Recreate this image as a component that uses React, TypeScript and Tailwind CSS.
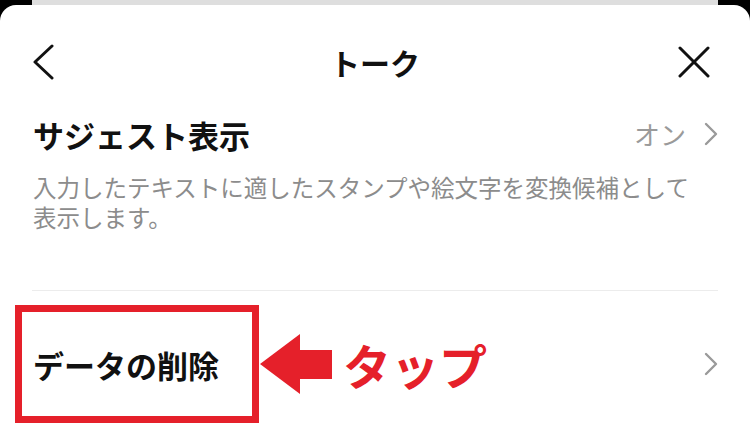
const jp = { fontFamily: '"Noto Sans CJK JP", "Noto Sans", sans-serif' };

function Chevron({ className }: { className?: string }) {
  return (
    <svg width="14" height="24" viewBox="0 0 14 24" className={className}>
      <polyline points="2,2 12,12 2,22" fill="none" stroke="currentColor" strokeWidth="2.4" strokeLinecap="round" strokeLinejoin="round" />
    </svg>
  );
}

export default function App() {
  return (
    <div className="w-[750px] h-[431px] bg-black flex flex-col overflow-hidden" style={jp}>
      {/* sheet behind */}
      <div className="mx-[32px] h-[5px] bg-[#dedede] shrink-0" />

      {/* sheet */}
      <div className="flex-1 bg-white rounded-t-[16px] flex flex-col">
        {/* header */}
        <div className="mt-[28px] h-[58px] px-[33px] grid grid-cols-[1fr_auto_1fr] items-center">
          <svg width="21" height="36" viewBox="0 0 21 36">
            <polyline points="19,2 2,18 19,34" fill="none" stroke="#111" strokeWidth="3" strokeLinecap="round" strokeLinejoin="round" />
          </svg>
          <div className="text-[30px] font-bold text-[#111] leading-none">トーク</div>
          <svg width="32" height="32" viewBox="0 0 32 32" className="justify-self-end mr-[7px]">
            <line x1="2" y1="2" x2="30" y2="30" stroke="#111" strokeWidth="3" strokeLinecap="round" />
            <line x1="30" y1="2" x2="2" y2="30" stroke="#111" strokeWidth="3" strokeLinecap="round" />
          </svg>
        </div>

        {/* suggest row */}
        <div className="mt-[24px] h-[38px] pl-[33px] pr-[32px] flex items-center">
          <div className="text-[31px] font-bold text-[#111] leading-none">サジェスト表示</div>
          <div className="ml-auto flex items-center gap-[18px] text-[#9a9a9a]">
            <span className="text-[26px] leading-none">オン</span>
            <Chevron />
          </div>
        </div>
        <div className="mt-[19px] px-[33px] text-[23.5px] leading-[30px] text-[#8c8c8c]">
          <div className="h-[30px]">入力したテキストに適したスタンプや絵文字を変換候補として</div>
          <div className="h-[30px]">表示します。</div>
        </div>

        <div className="mt-[58px] mx-[32px] h-px bg-[#ececec]" />

        {/* delete data row */}
        <div className="mt-[14px] ml-[15px] mr-[32px] flex items-center">
          <div className="w-[244px] h-[118px] border-[7px] border-[#e5202a] flex items-center pl-[11px] shrink-0">
            <span className="text-[31px] font-bold text-[#111] leading-none">データの削除</span>
          </div>
          <svg width="74" height="62" viewBox="0 0 74 62" className="shrink-0">
            <polygon points="1,31 41,1 41,17 73,17 73,46 41,46 41,61" fill="#e5202a" />
          </svg>
          <span className="ml-[10px] text-[48px] font-bold text-[#e5202a] leading-none">タップ</span>
          <Chevron className="ml-auto text-[#9a9a9a]" />
        </div>
      </div>
    </div>
  );
}
